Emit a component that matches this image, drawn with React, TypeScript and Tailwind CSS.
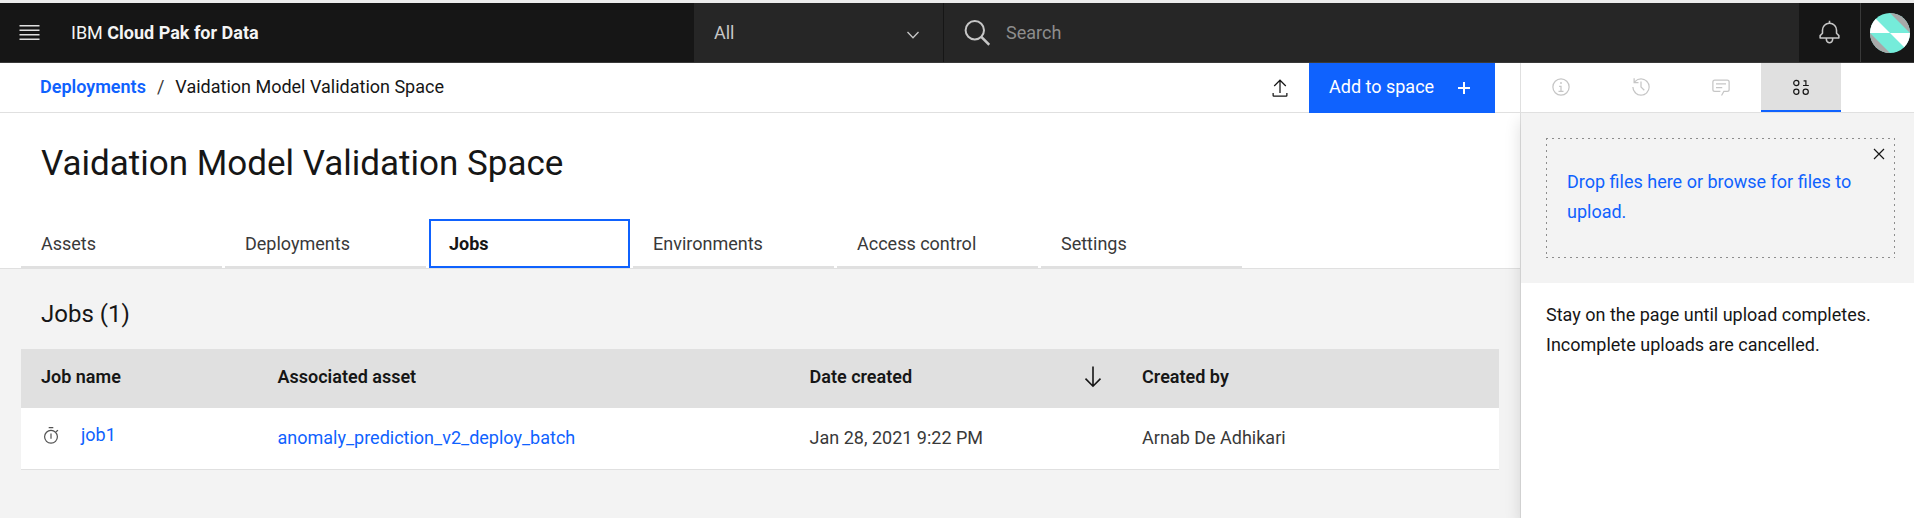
import React from "react";

type IconProps = { className?: string };

function MenuIcon({ className }: IconProps) {
  return (
    <svg className={className} viewBox="0 0 20 20" fill="currentColor" aria-hidden="true">
      <path d="M2 14.8H18V16H2zM2 11.2H18V12.4H2zM2 7.6H18V8.8H2zM2 4H18V5.2H2z" />
    </svg>
  );
}

function ChevronIcon({ className }: IconProps) {
  return (
    <svg className={className} viewBox="0 0 20 20" fill="none" stroke="currentColor" strokeWidth="1.3" aria-hidden="true">
      <path d="M4.5 9L10 14.8 15.5 9" />
    </svg>
  );
}

function SearchIcon({ className }: IconProps) {
  return (
    <svg className={className} viewBox="0 0 26 26" fill="none" stroke="currentColor" aria-hidden="true">
      <circle cx="10.8" cy="10.3" r="9.2" strokeWidth="2" />
      <path d="M17.3 16.8L25.3 24.8" strokeWidth="2.6" />
    </svg>
  );
}

function BellIcon({ className }: IconProps) {
  return (
    <svg className={className} viewBox="0 0 32 32" fill="currentColor" aria-hidden="true">
      <path d="M28.7071,19.293,26,16.5859V13a10.0136,10.0136,0,0,0-9-9.9492V1H15V3.0508A10.0136,10.0136,0,0,0,6,13v3.5859L3.2929,19.293A1,1,0,0,0,3,20v3a1,1,0,0,0,1,1h7v.7768a5.152,5.152,0,0,0,4.5,5.1987A5.0057,5.0057,0,0,0,21,25V24h7a1,1,0,0,0,1-1V20A1,1,0,0,0,28.7071,19.293ZM19,25a3,3,0,0,1-6,0V24h6Zm8-3H5V20.4141L7.707,17.707A1,1,0,0,0,8,17V13a8,8,0,0,1,16,0v4a1,1,0,0,0,.293.707L27,20.4141Z" />
    </svg>
  );
}

function Avatar({ className }: IconProps) {
  return (
    <svg className={className} viewBox="0 0 40 40" aria-hidden="true">
      <defs>
        <clipPath id="avatar-clip">
          <circle cx="20" cy="20" r="20" />
        </clipPath>
      </defs>
      <g clipPath="url(#avatar-clip)">
        <rect width="40" height="40" fill="#75ecda" />
        <path d="M20 0H40V20z" fill="#a8a8a8" />
        <path d="M0 20V40H20z" fill="#a8a8a8" />
        <path d="M0 0L20 20H0z" fill="#ffffff" />
        <path d="M20 20H40V40z" fill="#ffffff" />
      </g>
    </svg>
  );
}

function ExportIcon({ className }: IconProps) {
  return (
    <svg className={className} viewBox="0 0 32 32" fill="currentColor" aria-hidden="true">
      <path d="M26 24v4H6V24H4v4a2 2 0 0 0 2 2H26a2 2 0 0 0 2-2V24zM6 12l1.41 1.41L15 5.83V24h2V5.83l7.59 7.58L26 12 16 2 6 12z" />
    </svg>
  );
}

function PlusIcon({ className }: IconProps) {
  return (
    <svg className={className} viewBox="0 0 12 12" fill="none" stroke="currentColor" strokeWidth="2" aria-hidden="true">
      <path d="M6 0V12M0 6H12" />
    </svg>
  );
}

function InfoIcon({ className }: IconProps) {
  return (
    <svg className={className} viewBox="0 0 32 32" fill="currentColor" aria-hidden="true">
      <path d="M17 22L17 14 13 14 13 16 15 16 15 22 12 22 12 24 20 24 20 22 17 22z" />
      <path d="M16 8a1.5 1.5 0 1 0 1.5 1.5A1.5 1.5 0 0 0 16 8z" />
      <path d="M16,30A14,14,0,1,1,30,16,14,14,0,0,1,16,30ZM16,4A12,12,0,1,0,28,16,12,12,0,0,0,16,4Z" />
    </svg>
  );
}

function HistoryIcon({ className }: IconProps) {
  return (
    <svg className={className} viewBox="0 0 32 32" fill="currentColor" aria-hidden="true">
      <path d="M20.59 22L15 16.41 15 7 17 7 17 15.58 22 20.59 20.59 22z" />
      <path d="M16,2A13.94,13.94,0,0,0,6,6.23V2H4v8h8V8H7.08A12,12,0,1,1,4,16H2A14,14,0,1,0,16,2Z" />
    </svg>
  );
}

function ChatIcon({ className }: IconProps) {
  return (
    <svg className={className} viewBox="0 0 32 32" fill="currentColor" aria-hidden="true">
      <path d="M17.74,30,16,29l4-7h6a2,2,0,0,0,2-2V8a2,2,0,0,0-2-2H6A2,2,0,0,0,4,8V20a2,2,0,0,0,2,2h9v2H6a4,4,0,0,1-4-4V8A4,4,0,0,1,6,4H26a4,4,0,0,1,4,4V20a4,4,0,0,1-4,4H21.16Z" />
      <path d="M8 10H24V12H8zM8 16H18V18H8z" />
    </svg>
  );
}

function DataIcon({ className }: IconProps) {
  return (
    <svg className={className} viewBox="0 0 20 20" fill="none" stroke="currentColor" strokeWidth="1.2" aria-hidden="true">
      <circle cx="5.3" cy="6" r="2.6" />
      <circle cx="5.3" cy="14.8" r="2.6" />
      <circle cx="14.7" cy="14.8" r="2.6" />
      <path d="M12.6 3.9H14.9V8.4M12 8.5H17.8" />
    </svg>
  );
}

function CloseIcon({ className }: IconProps) {
  return (
    <svg className={className} viewBox="0 0 12 12" fill="none" stroke="currentColor" strokeWidth="1.2" aria-hidden="true">
      <path d="M1 1L11 11M11 1L1 11" />
    </svg>
  );
}

function ArrowDownIcon({ className }: IconProps) {
  return (
    <svg className={className} viewBox="0 0 18 22" fill="none" stroke="currentColor" strokeWidth="1.6" aria-hidden="true">
      <path d="M9 0.5V20M1.5 12.6L9 20.2 16.5 12.6" />
    </svg>
  );
}

function TimerIcon({ className }: IconProps) {
  return (
    <svg className={className} viewBox="0 0 18 18" fill="none" stroke="currentColor" strokeWidth="1.2" aria-hidden="true">
      <circle cx="10" cy="10.8" r="6.4" />
      <path d="M7.7 1.6H12.3M10 7.6V12.8M14.9 5.8L17 4.2" />
    </svg>
  );
}

const tabs = ["Assets", "Deployments", "Jobs", "Environments", "Access control", "Settings"];

const panelTabs = [
  { label: "Information", Icon: InfoIcon },
  { label: "History", Icon: HistoryIcon },
  { label: "Comments", Icon: ChatIcon },
  { label: "Data", Icon: DataIcon },
];

function Header() {
  return (
    <header className="flex h-[63px] shrink-0 border-t-[3px] border-b border-t-[#ececec] border-b-[#393939] bg-[#161616] text-[18px]">
      <button type="button" aria-label="Open menu" className="flex w-[59px] items-center justify-center text-[#e0e0e0]">
        <MenuIcon className="size-[25px]" />
      </button>
      <div className="flex flex-1 items-center pl-3 text-[#f4f4f4]">
        <p>
          IBM <span className="font-bold">Cloud Pak for Data</span>
        </p>
      </div>
      <div className="relative flex w-[250px] shrink-0 items-center border-r border-[#161616] bg-[#262626]">
        <select aria-label="Search scope" className="h-full w-full appearance-none px-5 text-[#c6c6c6]">
          <option>All</option>
        </select>
        <ChevronIcon className="pointer-events-none absolute right-5 size-5 text-[#c6c6c6]" />
      </div>
      <div className="flex w-[855px] shrink items-center gap-4 bg-[#262626] pl-5 text-[#c6c6c6]">
        <SearchIcon className="size-[26px] shrink-0" />
        <input
          type="search"
          aria-label="Search"
          placeholder="Search"
          className="h-full w-full min-w-0 placeholder:text-[#8d8d8d]"
        />
      </div>
      <button type="button" aria-label="Notifications" className="flex w-[62px] shrink-0 items-center justify-center border-r border-[#393939] text-[#c6c6c6]">
        <BellIcon className="size-[25px]" />
      </button>
      <button type="button" aria-label="Account" className="flex w-[53px] shrink-0 items-center pl-[9px]">
        <Avatar className="size-10" />
      </button>
    </header>
  );
}

function JobsTable() {
  return (
    <table className="w-full table-fixed border-collapse text-left">
      <colgroup>
        <col className="w-[16%]" />
        <col className="w-[36%]" />
        <col className="w-[22.5%]" />
        <col />
      </colgroup>
      <thead>
        <tr className="h-[59px] bg-[#e0e0e0] text-[#161616]">
          <th scope="col" className="px-5 pb-1 font-semibold">Job name</th>
          <th scope="col" className="px-5 pb-1 font-semibold">Associated asset</th>
          <th scope="col" aria-sort="descending" className="pb-1 pl-5 font-semibold">
            <button type="button" className="flex w-full items-center justify-between pr-5">
              Date created
              <ArrowDownIcon className="h-[22px] w-[18px]" />
            </button>
          </th>
          <th scope="col" className="px-5 pb-1 font-semibold">Created by</th>
        </tr>
      </thead>
      <tbody>
        <tr className="h-[61px] border-b border-[#e0e0e0] bg-white text-[#393939]">
          <td className="px-5 pb-1">
            <div className="flex items-center gap-[22px] pb-0.5">
              <TimerIcon className="size-[18px] text-[#525252]" />
              <a href="#job1" className="text-[#0f62fe]">job1</a>
            </div>
          </td>
          <td className="px-5 pb-px">
            <a href="#asset" className="text-[#0f62fe]">anomaly_prediction_v2_deploy_batch</a>
          </td>
          <td className="px-5 pb-px">Jan 28, 2021 9:22 PM</td>
          <td className="px-5 pb-px">Arnab De Adhikari</td>
        </tr>
      </tbody>
    </table>
  );
}

function SidePanel() {
  return (
    <aside className="flex w-[394px] shrink-0 flex-col border-l border-[#e0e0e0]">
      <div role="tablist" aria-label="Side panel" className="relative z-20 flex h-[50px] border-b border-[#e0e0e0] bg-white">
        {panelTabs.map(({ label, Icon }) => {
          const active = label === "Data";
          return (
            <button
              key={label}
              type="button"
              role="tab"
              aria-selected={active}
              aria-label={label}
              className={
                active
                  ? "flex w-20 items-center justify-center border-b-2 border-[#0f62fe] bg-[#e0e0e0] text-[#161616]"
                  : "flex w-20 items-center justify-center border-b-2 border-transparent text-[#c6c6c6]"
              }
            >
              <Icon className="size-5" />
            </button>
          );
        })}
      </div>
      <div className="relative z-10 flex-1 bg-white shadow-[0_8px_16px_rgba(0,0,0,0.14)]">
        <div className="bg-[#f3f3f3] pt-[25px] pr-[19px] pb-[25px] pl-[25px]">
          <div className="relative px-[21px] pt-[29px] pb-[31px] [background-image:linear-gradient(90deg,#8d8d8d_2px,transparent_2px),linear-gradient(90deg,#8d8d8d_2px,transparent_2px),linear-gradient(#8d8d8d_2px,transparent_2px),linear-gradient(#8d8d8d_2px,transparent_2px)] [background-position:left_top,left_bottom,left_top,right_top] [background-repeat:repeat-x,repeat-x,repeat-y,repeat-y] [background-size:6px_1px,6px_1px,1px_6px,1px_6px]">
            <label className="block cursor-pointer leading-[30px] text-[#0f62fe]">
              Drop files here or browse for files to upload.
              <input type="file" className="sr-only" />
            </label>
            <button type="button" aria-label="Close" className="absolute top-[10px] right-[10px] text-[#161616]">
              <CloseIcon className="size-3" />
            </button>
          </div>
        </div>
        <p className="px-[25px] pt-[17px] leading-[30px] text-[#161616]">
          Stay on the page until upload completes. Incomplete uploads are cancelled.
        </p>
      </div>
    </aside>
  );
}

export default function App() {
  return (
    <div className="flex min-h-screen flex-col overflow-hidden bg-[#f3f3f3] font-['Roboto','Liberation_Sans',sans-serif] text-[18px] leading-6">
      <Header />
      <div className="flex flex-1">
        <main className="min-w-0 flex-1">
          <div className="relative z-20 flex h-[50px] items-stretch justify-between border-b border-[#e0e0e0] bg-white pl-10">
            <nav aria-label="Breadcrumb" className="flex items-center gap-[11px] pb-0.5">
              <a href="#deployments" className="font-semibold text-[#0f62fe]">Deployments</a>
              <span className="text-[#393939]">/</span>
              <span className="text-[#161616]">Vaidation Model Validation Space</span>
            </nav>
            <div className="-mb-px flex pr-[25px]">
              <button type="button" aria-label="Upload" className="px-[19px] text-[#161616]">
                <ExportIcon className="size-5" />
              </button>
              <button type="button" className="flex w-[186px] items-center justify-between bg-[#0f62fe] pr-[25px] pl-5 text-white">
                <span className="pb-0.5">Add to space</span>
                <PlusIcon className="size-3" />
              </button>
            </div>
          </div>
          <div className="border-b border-[#e0e0e0] bg-white">
            <h1 className="px-[41px] pt-[29px] text-[35px] leading-[44px] text-[#161616]">Vaidation Model Validation Space</h1>
            <div role="tablist" aria-label="Space sections" className="mt-[33px] flex gap-[3px] px-[21px]">
              {tabs.map((tab) => {
                const active = tab === "Jobs";
                return (
                  <button
                    key={tab}
                    type="button"
                    role="tab"
                    aria-selected={active}
                    className={
                      active
                        ? "h-[49px] w-[201px] border-2 border-[#0f62fe] px-[18px] text-left font-bold text-[#161616]"
                        : "h-[49px] w-[201px] border-b-2 border-[#e0e0e0] px-5 pt-0.5 text-left text-[#393939]"
                    }
                  >
                    {tab}
                  </button>
                );
              })}
            </div>
          </div>
          <section className="px-[21px] pb-8">
            <h2 className="px-5 pt-[29px] pb-[19px] text-[24px] leading-8 text-[#161616]">Jobs (1)</h2>
            <JobsTable />
          </section>
        </main>
        <SidePanel />
      </div>
    </div>
  );
}
